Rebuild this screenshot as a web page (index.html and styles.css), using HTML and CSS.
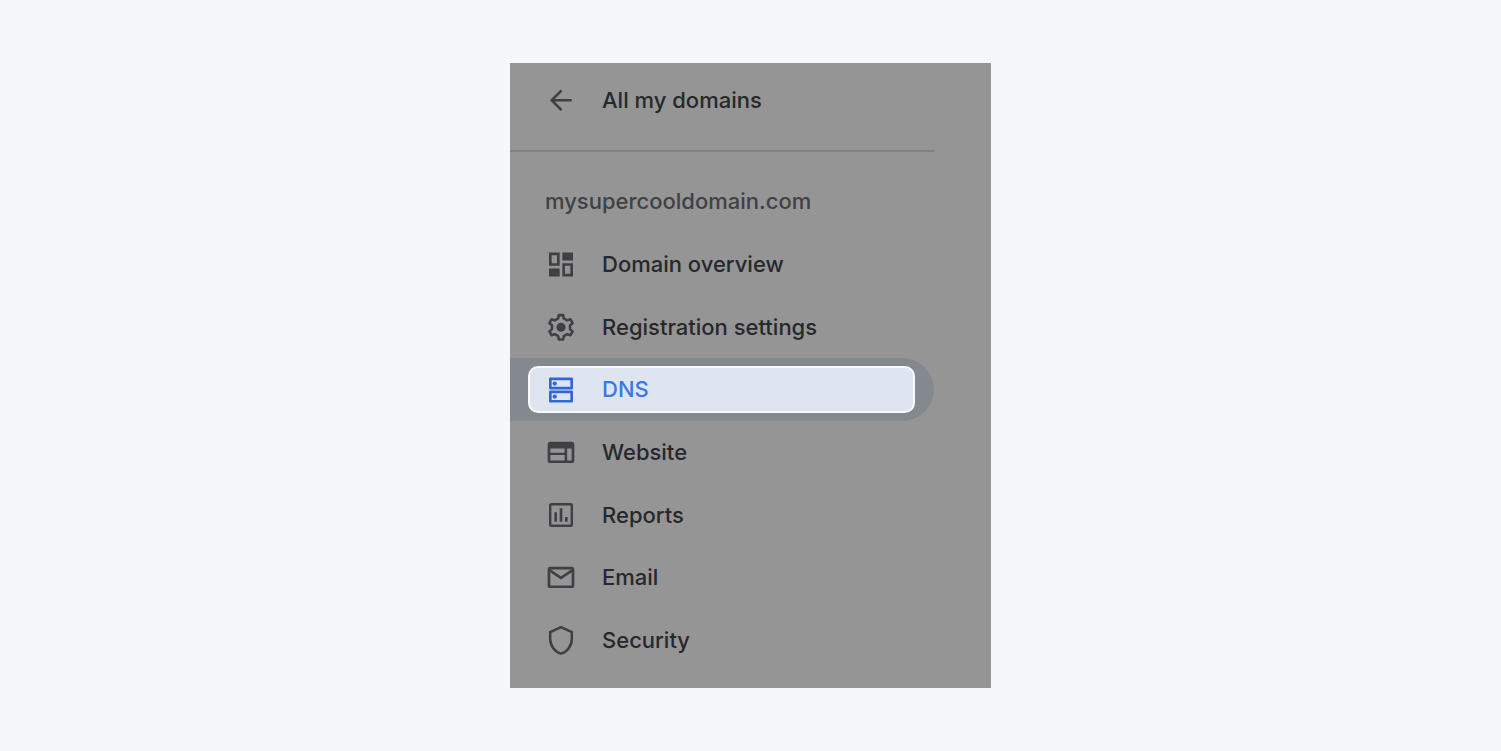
FILE: index.html
```
<!DOCTYPE html>
<html lang="en">
<head>
  <meta charset="UTF-8" />
  <meta name="viewport" content="width=device-width, initial-scale=1.0" />
  <title>DNS - mysupercooldomain.com</title>
  <link rel="stylesheet" href="styles.css">
</head>
<body>
  <aside class="sidebar">
    <header class="sidebar-top">
      <a class="back-link" href="#">
        <svg class="icon" viewBox="0 0 24 24"><path d="M20 12.2H5.500M12.400 4.800L5 12.200l7.400 7.400" fill="none" stroke="currentColor" stroke-width="1.900"/></svg>
        All my domains
      </a>
    </header>

    <h1 class="domain">mysupercooldomain.com</h1>

    <nav class="menu-nav">
      <ul class="menu">
        <li class="menu-item">
          <a href="#">
            <svg class="icon" viewBox="0 0 24 24"><path fill="currentColor" fill-rule="evenodd" d="M3 3.400h8v10H3zM5 5.400v6h4v-6zM13 3.400h8v6h-8zM3 15.400h8v6H3zM13 11.400h8v10h-8zM15 13.400v6h4v-6z"/></svg>
            Domain overview
          </a>
        </li>
        <li class="menu-item">
          <a href="#">
            <svg class="icon" viewBox="0 0 24 24"><path fill="none" stroke="currentColor" stroke-width="1.900" stroke-linejoin="round" d="M10.300 3.100h3.400l.4 2.500 2.570 1.480 2.360-.9 1.700 2.940-1.960 1.600v2.960l1.960 1.600-1.700 2.940-2.360-.9-2.570 1.480-.4 2.500h-3.400l-.4-2.500-2.570-1.480-2.360.9-1.700-2.940 1.960-1.600v-2.960l-1.960-1.600 1.700-2.940 2.360.9 2.570-1.480z"/><circle cx="12" cy="12.200" r="3.400" fill="currentColor"/></svg>
            Registration settings
          </a>
        </li>
        <li class="menu-item active">
          <a href="#" aria-current="page">
            <svg class="icon" viewBox="0 0 24 24"><path fill="none" stroke="currentColor" stroke-width="2" stroke-linejoin="round" d="M4 4.400h16v7H4zM4 14.200h16v7H4z"/><circle cx="7.300" cy="7.900" r="1.600" fill="currentColor"/><circle cx="7.300" cy="17.700" r="1.600" fill="currentColor"/></svg>
            DNS
          </a>
        </li>
        <li class="menu-item">
          <a href="#">
            <svg class="icon" viewBox="0 0 24 24"><path fill="currentColor" fill-rule="evenodd" d="M4 4.300h16c1.100 0 2 .9 2 2v12c0 1.100-.9 2-2 2H4c-1.100 0-2-.9-2-2v-12c0-1.100.9-2 2-2zM4 9.300v3.200h10.700V9.300zM4 14.300v4h10.700v-4zM16.600 9.300v9H20v-9z"/></svg>
            Website
          </a>
        </li>
        <li class="menu-item">
          <a href="#">
            <svg class="icon" viewBox="0 0 24 24"><rect x="3.900" y="3.900" width="16.200" height="16.200" rx="1" fill="none" stroke="currentColor" stroke-width="1.800"/><path fill="currentColor" d="M7 10h2v7H7zM11 7h2v10h-2zM15 13.500h2V17h-2z"/></svg>
            Reports
          </a>
        </li>
        <li class="menu-item">
          <a href="#">
            <svg class="icon" viewBox="0 0 24 24"><rect x="3" y="5.300" width="18" height="14" rx="1" fill="none" stroke="currentColor" stroke-width="2"/><path fill="none" stroke="currentColor" stroke-width="2" d="M3 6.600l9 6 9-6"/></svg>
            Email
          </a>
        </li>
        <li class="menu-item">
          <a href="#">
            <svg class="icon" viewBox="0 0 24 24"><path fill="none" stroke="currentColor" stroke-width="1.900" d="M12 2.400L3.900 6v5.300c0 5 3.400 9.600 8.100 10.900 4.700-1.300 8.100-5.900 8.100-10.900V6z"/></svg>
            Security
          </a>
        </li>
      </ul>
    </nav>
  </aside>
</body>
</html>
```
FILE: styles.css
```
* {
  box-sizing: border-box;
}
body {
  display: flex;
  justify-content: center;
  min-height: 100vh;
  margin: 0;
  padding: 63px 16px;
  background-color: #f6f7f9;
  font-family: 'Inter', sans-serif;
  font-size: 22px;
  font-weight: 500;
  line-height: 32px;
  color: #27282b;
}
a {
  color: inherit;
  text-decoration: none;
}
.sidebar {
  display: flex;
  flex-direction: column;
  width: 100%;
  max-width: 481px;
  padding-bottom: 17px;
  background-color: #959595;
}
.sidebar-top {
  margin-right: 57px;
  padding: 21px 35px 34px;
  border-bottom: 2px solid #828282;
}
.back-link {
  display: flex;
  align-items: center;
  gap: 25px;
}
.icon {
  flex: none;
  width: 32px;
  height: 32px;
  color: #3f4044;
}
.domain {
  margin: 0;
  padding: 33px 35px 16px;
  font-size: 22px;
  font-weight: 500;
  color: #404145;
}

/* menu */
.menu-nav {
  display: flex;
  flex: 1;
}
.menu {
  display: grid;
  flex: 1;
  grid-auto-rows: 1fr;
  margin: 0;
  padding: 0;
  list-style: none;
}
.menu-item {
  display: flex;
  margin-right: 57px;
  padding: 8px 19px 8px 18px;
}
.menu-item a {
  display: flex;
  flex: 1;
  align-items: center;
  gap: 25px;
  padding: 5px 15px;
  border: 2px solid transparent;
  border-radius: 10px;
}
.menu-item.active {
  background-color: #848990;
  border-radius: 0 32px 32px 0;
}
.menu-item.active a {
  background-color: #dee4f0;
  border-color: #f8f9fb;
  color: #3b78e7;
}
.menu-item.active .icon {
  color: #3367d6;
}
```
